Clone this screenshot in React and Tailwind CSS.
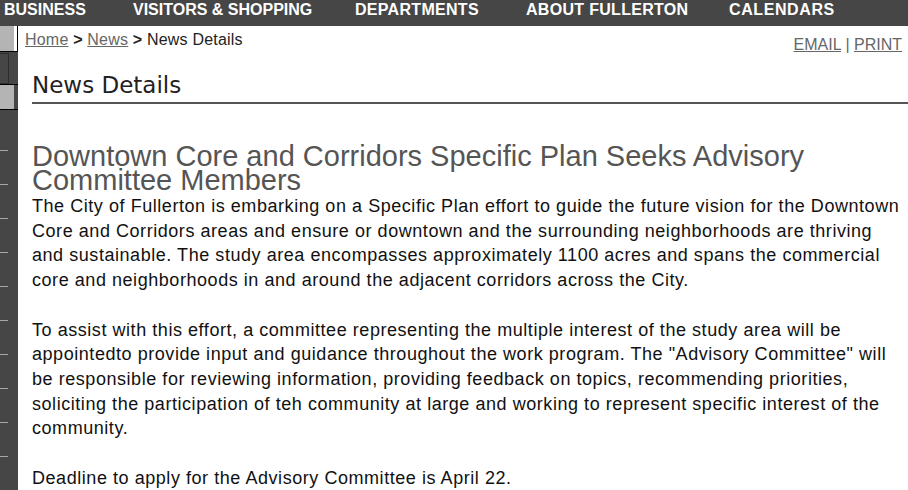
import React from 'react';

const navItems = [
    { label: 'BUSINESS', cls: 'ml-[4px] w-[129px]' },
    { label: 'VISITORS & SHOPPING', cls: 'w-[222px]' },
    { label: 'DEPARTMENTS', cls: 'w-[171px] tracking-[0.3px]' },
    { label: 'ABOUT FULLERTON', cls: 'w-[203px] tracking-[0.3px]' },
    { label: 'CALENDARS', cls: 'tracking-[0.6px]' },
];

function Sidebar() {
    const ticks = [0, 1, 2, 3, 4, 5, 6, 7, 8, 9];
    return (
        <div className="w-[18px] shrink-0 bg-[#464646] flex flex-col">
            {/* top light tab */}
            <div className="h-[35px] flex border-b border-black">
                <div className="w-[14px] bg-[#b4b4b4]" />
                <div className="w-[3px] bg-white" />
                <div className="w-px bg-black" />
            </div>
            {/* dark tab with inset box */}
            <div className="h-[46px] border-b border-black pt-[1px]">
                <div className="w-[9px] h-[31px] border border-[#2e2e2e] border-l-0" />
            </div>
            {/* second light tab */}
            <div className="h-[34px] flex border-b border-black">
                <div className="w-[14px] bg-[#b4b4b4]" />
                <div className="w-[4px] bg-[#464646]" />
            </div>
            <div className="flex flex-col pt-[40px]">
                {ticks.map((t) => (
                    <div key={t} className="h-[34px]">
                        <div className="w-[8px] h-px bg-[#a8a8a8]" />
                    </div>
                ))}
            </div>
        </div>
    );
}

export default function App() {
    return (
        <div className="w-[908px] h-[490px] overflow-hidden bg-white font-['Liberation_Sans',Arial,sans-serif]">
            <nav className="h-[26px] bg-[#464646] flex items-start pt-[1px] text-white font-bold text-[16px] leading-[18px] whitespace-nowrap">
                {navItems.map((item) => (
                    <span key={item.label} className={'shrink-0 ' + item.cls}>
                        {item.label}
                    </span>
                ))}
            </nav>
            <div className="flex h-[464px]">
                <Sidebar />
                <main className="flex-1 pl-[7px]">
                    <div className="flex items-start justify-between pr-[6px] pt-[5px] text-[16px] leading-[18px]">
                        <div className="text-[#222] tracking-[0.2px]">
                            <a href="#" className="text-[#666] underline">Home</a>
                            <span className="font-bold"> &gt; </span>
                            <a href="#" className="text-[#666] underline">News</a>
                            <span className="font-bold"> &gt; </span>
                            <span>News Details</span>
                        </div>
                        <div className="text-[#666] pt-[5px]">
                            <a href="#" className="underline">EMAIL</a>
                            <span> | </span>
                            <a href="#" className="underline">PRINT</a>
                        </div>
                    </div>
                    <div className="pl-[7px]">
                        <h1 className="font-['DejaVu_Sans',sans-serif] text-[23px] leading-[28px] text-[#222] mt-[17px] pb-[3px] border-b-2 border-[#555]">
                            News Details
                        </h1>
                        <h2 className="text-[29px] leading-[24px] text-[#555] mt-[40px] pr-[60px]">
                            Downtown Core and Corridors Specific Plan Seeks Advisory Committee Members
                        </h2>
                        <div className="text-[18px] leading-[24.7px] tracking-[0.55px] text-[#111] pr-[6px] mt-[2px]">
                            <p>
                                The City of Fullerton is embarking on a Specific Plan effort to guide the future vision for the Downtown Core and Corridors areas and ensure or downtown and the surrounding neighborhoods are thriving and sustainable. The study area encompasses approximately 1100 acres and spans the commercial core and neighborhoods in and around the adjacent corridors across the City.
                            </p>
                            <p className="mt-[24.7px]">
                                To assist with this effort, a committee representing the multiple interest of the study area will be appointedto provide input and guidance throughout the work program. The "Advisory Committee" will be responsible for reviewing information, providing feedback on topics, recommending priorities, soliciting the participation of teh community at large and working to represent specific interest of the community.
                            </p>
                            <p className="mt-[24.7px]">
                                Deadline to apply for the Advisory Committee is April 22.
                            </p>
                        </div>
                    </div>
                </main>
            </div>
        </div>
    );
}
